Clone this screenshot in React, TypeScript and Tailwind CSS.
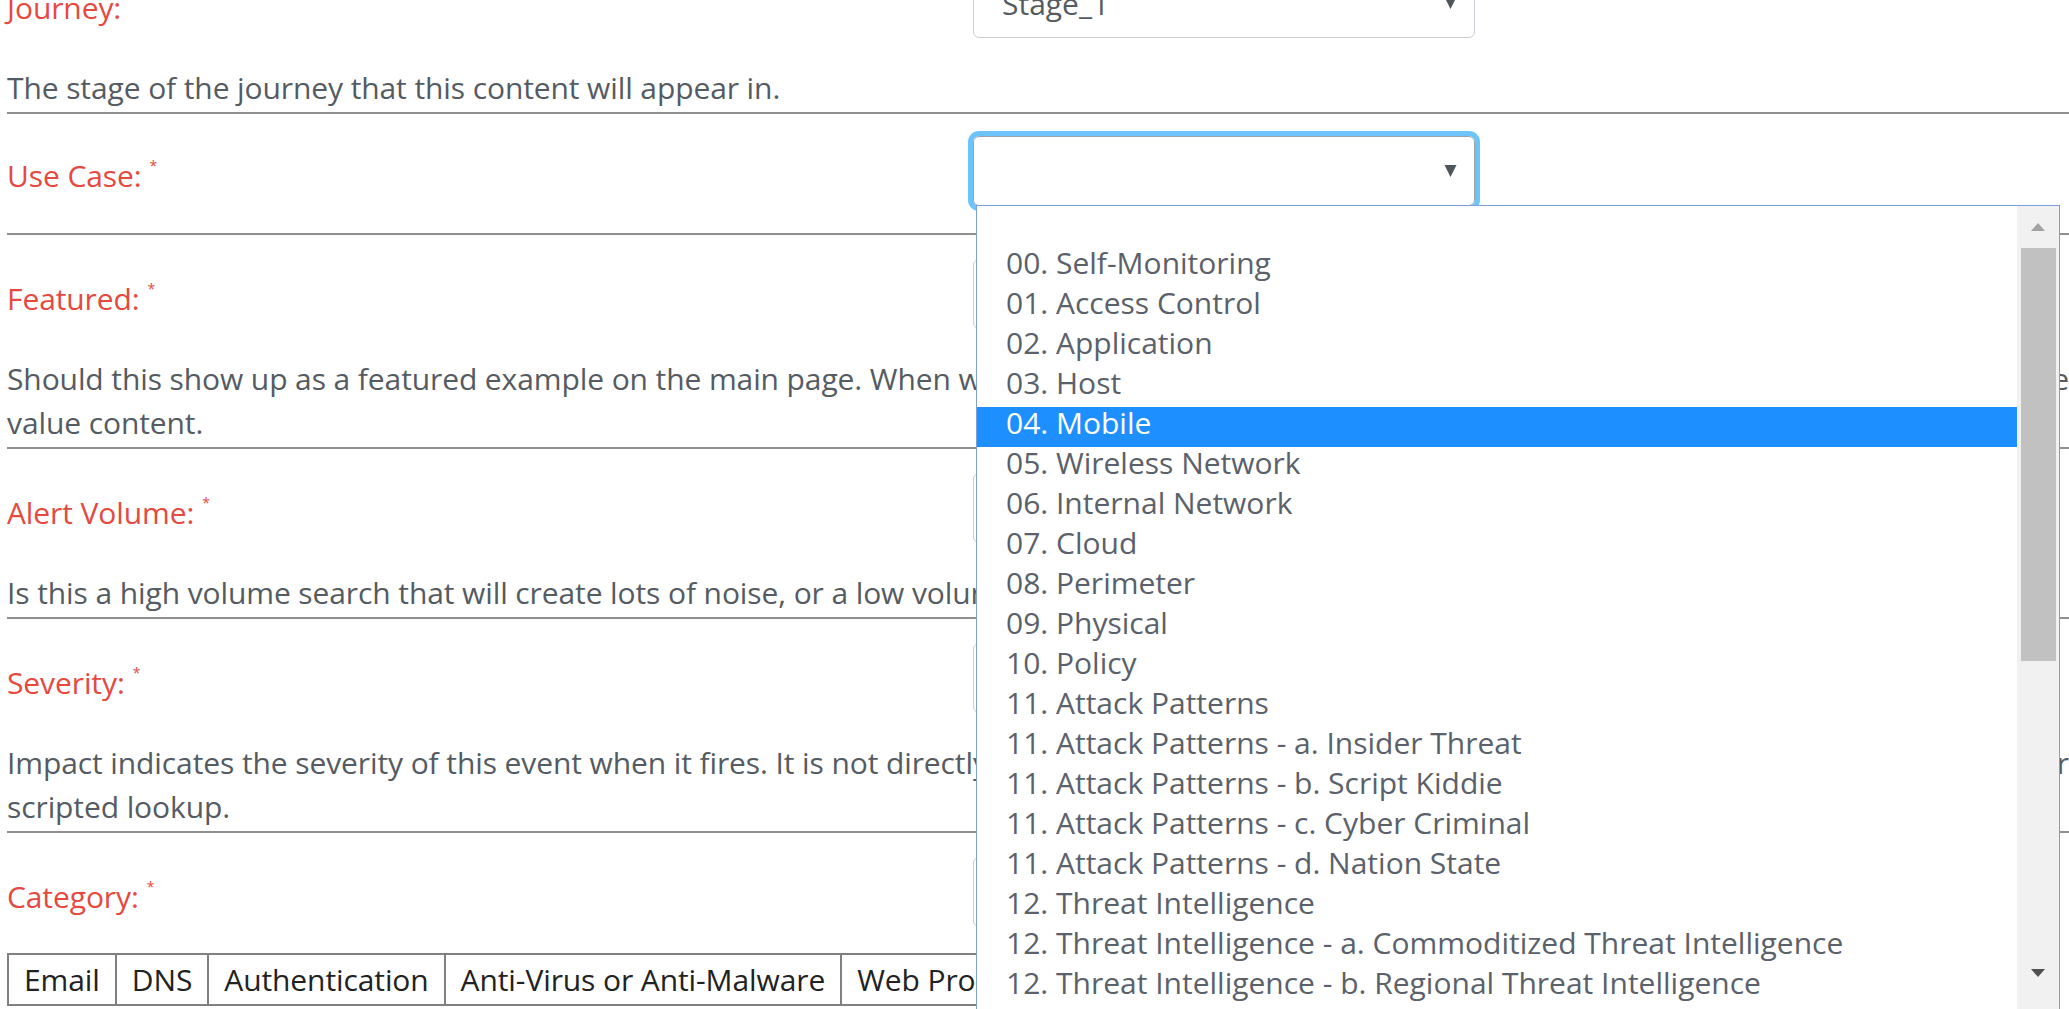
import React from "react";

type Field = {
  label: string;
  required?: boolean;
  value?: string;
  focused?: boolean;
  // first line: [text, last word pinned to the right edge]; rest: plain lines
  description?: { first: [string, string?]; rest?: string[] };
};

const FIELDS: Field[] = [
  {
    label: "Journey:",
    value: "Stage_1",
    description: { first: ["The stage of the journey that this content will appear in."] },
  },
  { label: "Use Case:", required: true, focused: true },
  {
    label: "Featured:",
    required: true,
    description: {
      first: [
        "Should this show up as a featured example on the main page. When we choose featured content, we try to show the examples that are easy to use and have",
        "the",
      ],
      rest: ["value content."],
    },
  },
  {
    label: "Alert Volume:",
    required: true,
    description: {
      first: [
        "Is this a high volume search that will create lots of noise, or a low volume search that is likely actionable?",
      ],
    },
  },
  {
    label: "Severity:",
    required: true,
    description: {
      first: [
        "Impact indicates the severity of this event when it fires. It is not directly tied to risk, but can be used as a factor when you build a lookup or",
        "other",
      ],
      rest: ["scripted lookup."],
    },
  },
];

const OPTIONS = [
  "00. Self-Monitoring",
  "01. Access Control",
  "02. Application",
  "03. Host",
  "04. Mobile",
  "05. Wireless Network",
  "06. Internal Network",
  "07. Cloud",
  "08. Perimeter",
  "09. Physical",
  "10. Policy",
  "11. Attack Patterns",
  "11. Attack Patterns - a. Insider Threat",
  "11. Attack Patterns - b. Script Kiddie",
  "11. Attack Patterns - c. Cyber Criminal",
  "11. Attack Patterns - d. Nation State",
  "12. Threat Intelligence",
  "12. Threat Intelligence - a. Commoditized Threat Intelligence",
  "12. Threat Intelligence - b. Regional Threat Intelligence",
  "12. Threat Intelligence - c. Targeted Threat Intelligence",
];

const CATEGORIES = [
  "Email",
  "DNS",
  "Authentication",
  "Anti-Virus or Anti-Malware",
  "Web Proxy",
  "Network Communication",
  "Endpoint Detection",
];

function Caret() {
  return (
    <svg width="13" height="14" viewBox="0 0 13 14">
      <path d="M0.5 1 L12.5 1 L6.5 13 Z" fill="#4f555c" />
    </svg>
  );
}

function Label({ text, required }: { text: string; required?: boolean }) {
  return (
    <div className="w-[966px] shrink-0 pt-[8px] text-[30px] tracking-[-0.1px] text-[#e5493f]">
      {text}
      {required && (
        <span className="relative -top-[16px] ml-[8px] text-[14px] text-[#e5493f]">*</span>
      )}
    </div>
  );
}

function FakeSelect({ value, focused }: { value?: string; focused?: boolean }) {
  return (
    <div
      className={
        "flex h-[70px] w-[502px] shrink-0 items-center justify-between rounded-[6px] border bg-white pl-[28px] pr-[17px] " +
        (focused
          ? "border-[#9aa3ad] outline-[5px] outline-solid outline-[#6cc4fb]"
          : "border-[#c9ced6]")
      }
    >
      <span className="text-[30px] text-[#555b62]">{value}</span>
      <Caret />
    </div>
  );
}

function Row({ field, index }: { field: Field; index: number }) {
  const top = index === 0 ? "-mt-[32px]" : index === 1 ? "mt-[22px]" : "mt-[24px]";
  const desc = field.description;
  return (
    <div className="border-b-2 border-[#8f8f8f]">
      <div className={"flex items-center " + top}>
        <Label text={field.label} required={field.required} />
        <FakeSelect value={field.value} focused={field.focused} />
      </div>
      {desc ? (
        <div className="mb-[2px] mt-[28px] text-[30px] leading-[44px] tracking-[-0.1px] text-[#555b62]">
          <div className="flex whitespace-nowrap">
            <span className="min-w-0 flex-1 overflow-hidden">{desc.first[0]}</span>
            {desc.first[1] && <span className="pl-[8px]">{desc.first[1]}</span>}
          </div>
          {desc.rest?.map((line) => (
            <div key={line} className="whitespace-nowrap">
              {line}
            </div>
          ))}
        </div>
      ) : (
        <div className="h-[27px]" />
      )}
    </div>
  );
}

function Dropdown() {
  return (
    <div className="absolute left-[976px] top-[205px] flex h-[820px] w-[1084px] border border-[#7b9fd6] bg-white">
      <ul className="flex-1 text-[30px] tracking-[0px] text-[#5b616a]">
        <li className="h-[41px]" />
        {OPTIONS.map((opt) => (
          <li
            key={opt}
            className={
              "flex h-[40px] items-center whitespace-nowrap pb-[10px] pl-[29px] " +
              (opt === "04. Mobile" ? "bg-[#1e8fff] text-white" : "")
            }
          >
            {opt}
          </li>
        ))}
      </ul>
      <div className="flex w-[42px] flex-col items-center bg-[#f1f1f1]">
        <div className="flex h-[42px] items-center justify-center">
          <svg width="16" height="10" viewBox="0 0 16 10">
            <path d="M8 1 L15 9 L1 9 Z" fill="#a3a3a3" />
          </svg>
        </div>
        <div className="h-[413px] w-[35px] bg-[#c1c1c1]" />
        <div className="flex-1" />
        <div className="mb-[36px] flex h-[30px] items-center justify-center">
          <svg width="16" height="10" viewBox="0 0 16 10">
            <path d="M1 1 L15 1 L8 9 Z" fill="#505050" />
          </svg>
        </div>
      </div>
    </div>
  );
}

export default function App() {
  return (
    <div
      className="relative h-[1009px] w-[2069px] overflow-hidden bg-white pl-[7px]"
      style={{ fontFamily: "'Open Sans', Lato, sans-serif" }}
    >
      {FIELDS.map((f, i) => (
        <Row key={f.label} field={f} index={i} />
      ))}

      <div className="mt-[24px] flex items-center">
        <Label text="Category:" required />
        <FakeSelect />
      </div>

      <table className="mt-[26px] border-collapse whitespace-nowrap text-[30px] tracking-[-0.1px] text-[#222]">
        <tbody>
          <tr>
            {CATEGORIES.map((c) => (
              <td key={c} className="h-[51px] border-2 border-[#808080] px-[15px]">
                {c}
              </td>
            ))}
          </tr>
        </tbody>
      </table>

      <Dropdown />
    </div>
  );
}
